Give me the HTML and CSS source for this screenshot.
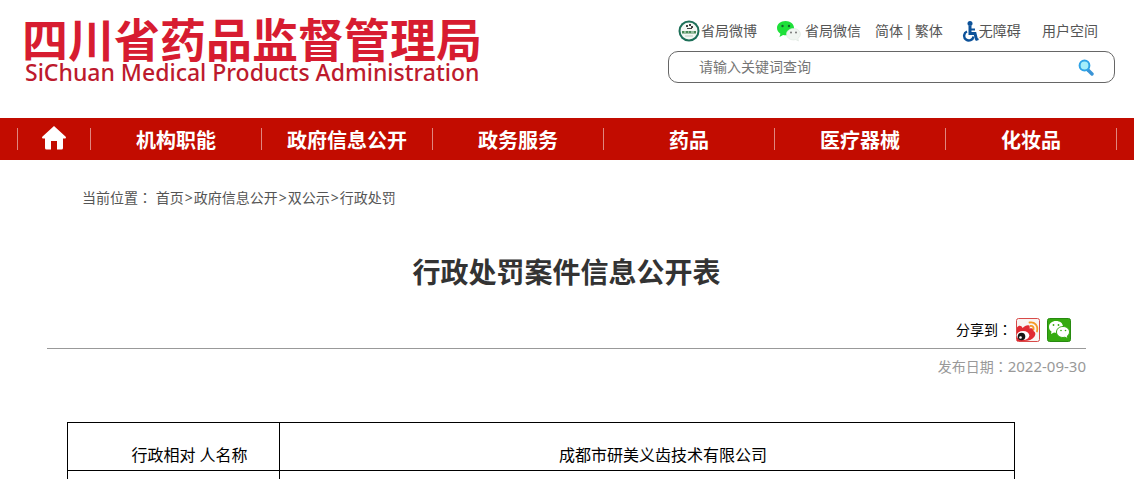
FILE: index.html
```html
<!DOCTYPE html>
<html lang="zh-CN">
<head>
  <meta charset="UTF-8" />
  <meta name="viewport" content="width=device-width, initial-scale=1.0"/>
  <title>行政处罚案件信息公开表</title>
  <link rel="stylesheet" href="styles.css">
</head>
<body>
  <header class="header">
    <a class="logo" href="#">
      <span class="logo-cn">四川省药品监督管理局</span>
      <span class="logo-en">SiChuan Medical Products Administration</span>
    </a>
    <div class="tools">
      <div class="top-links">
        <a href="#" class="weibo">
          <svg width="22" height="22" viewBox="0 0 22 22">
            <circle cx="11" cy="11" r="10.5" fill="#1d6f58"/>
            <circle cx="11" cy="11" r="8.500" fill="#f4f8f4"/>
            <path d="M8 5h2v2H8zM11 4h2v2h-2zM9 8h5v1H9zM13 6h2v2h-2z" fill="#444"/>
            <path d="M4 11h14v2.500H4z" fill="#4a8a58"/>
            <path d="M6 12h2M10 12h1M13 12h3" stroke="#dfeee2"/>
            <path d="M7 16h8" stroke="#b8ccbe"/>
          </svg>省局微博</a>
        <a href="#" class="weixin">
          <svg width="25" height="22" viewBox="0 0 25 22">
            <path d="M9.500 1C4.500 1 1 4 1 8c0 2.500 1.300 4.400 3.400 5.700L3.500 17l3.600-2c.8.200 1.600.300 2.400.3 5 0 8.500-3.200 8.500-7.300S14.500 1 9.500 1z" fill="#1fe03a"/>
            <circle cx="6.500" cy="6" r="1.200" fill="#14642a"/>
            <circle cx="13" cy="6" r="1.200" fill="#14642a"/>
            <path d="M17.500 8.500c-4 0-7 2.500-7 5.700s3 5.700 7 5.700c.8 0 1.500-.1 2.200-.3l2.800 1.400-.7-2.500c1.600-1 2.600-2.600 2.600-4.300 0-3.200-3-5.700-6.900-5.700z" fill="#f0f5f1" stroke="#dce5de" stroke-width=".6"/>
            <circle cx="15" cy="12.500" r="1" fill="#777"/>
            <circle cx="20" cy="12.500" r="1" fill="#777"/>
          </svg>省局微信</a>
        <span class="lang"><a href="#">简体</a>|<a href="#">繁体</a></span>
        <a href="#" class="barrier">
          <svg width="17" height="22" viewBox="0 0 17 22">
            <circle cx="8" cy="3.500" r="2.500" fill="#0d5299"/>
            <path d="M8 6v7.500h5l1.500 6" fill="none" stroke="#0d5299" stroke-width="3"/>
            <path d="M8 9.500h5M13.500 20l3-1" fill="none" stroke="#0d5299" stroke-width="2"/>
            <path d="M5 11.500a4.700 4.700 0 1 0 6.500 5" fill="none" stroke="#0d5299" stroke-width="2.400"/>
          </svg>无障碍</a>
        <a href="#" class="user">用户空间</a>
      </div>
      <form class="search">
        <input type="text" placeholder="请输入关键词查询" aria-label="请输入关键词查询">
        <button type="button" aria-label="搜索">
          <svg width="16" height="17" viewBox="0 0 16 17">
            <path d="M10 11l4 4" stroke="#3a94d6" stroke-width="3.400" stroke-linecap="round"/>
            <circle cx="6.500" cy="6.500" r="4.900" fill="#a4eefa" stroke="#2fa3e6" stroke-width="2"/>
          </svg>
        </button>
      </form>
    </div>
  </header>

  <nav class="nav">
    <a href="#" class="home" aria-label="首页">
      <svg width="24" height="24" viewBox="0 0 24 24">
        <path d="M12 0L0 11q0 1.500 1 1.500h2V22q0 1.500 1.500 1.500H9V15h6v8.500h4.500q1.500 0 1.500-1.500v-9.500h2q1 0 1-1.500z" fill="#fff"/>
      </svg>
    </a>
    <a href="#">机构职能</a>
    <a href="#">政府信息公开</a>
    <a href="#">政务服务</a>
    <a href="#">药品</a>
    <a href="#">医疗器械</a>
    <a href="#">化妆品</a>
  </nav>

  <div class="crumbs">当前位置<span class="colon" lang="zh-TW">：</span> <a href="#">首页</a><span class="sep">&gt;</span><a href="#">政府信息公开</a><span class="sep">&gt;</span><a href="#">双公示</a><span class="sep">&gt;</span><a href="#">行政处罚</a></div>

  <main class="article">
    <h1>行政处罚案件信息公开表</h1>
    <div class="share">
      <div class="share-label">分享到<span class="colon" lang="zh-TW">：</span></div>
      <a href="#" aria-label="微博">
        <svg width="24" height="24" viewBox="0 0 24 24">
          <rect x=".5" y=".5" width="23" height="23" rx="2" fill="#f8f4f2" stroke="#d84a48"/>
          <path d="M1 9.500C2.500 7 5.500 7 6.500 10c2-2 5-3.500 6.500-2.500 1 .700.800 2 .5 3 2.500-.8 4.500-.3 4 2.500 2 1 2.500 3 1 5.500-2 3-6 4.500-10.500 4.500H1z" fill="#e02a32"/>
          <ellipse cx="7" cy="17.500" rx="6.300" ry="4.500" fill="#fff"/>
          <circle cx="5.500" cy="18.500" r="3.800" fill="#151515"/>
          <circle cx="4.500" cy="19.500" r="1.300" fill="#fff"/>
          <path d="M13.500 4.500c5-1 9 3 7.500 9M14.500 8c2.500-.3 3.500 1.500 3 3.500" fill="none" stroke="#f59a23" stroke-width="1.800" stroke-linecap="round"/>
        </svg>
      </a>
      <a href="#" aria-label="微信">
        <svg width="24" height="24" viewBox="0 0 24 24">
          <rect x=".5" y=".5" width="23" height="23" rx="2" fill="#35aa10" stroke="#278a10"/>
          <path d="M9 3C5 3 2 5.500 2 9c0 2 1 3.500 2.500 4.500L4 16l3-1.500c5 1.500 9-1.500 9-5.500S13 3 9 3z" fill="#fff"/>
          <path d="M16 8.500c-3.700 0-6.500 2.400-6.500 5.500s3 5.500 6.500 5.500c.7 0 1.400-.1 2-.3l3 1.500-.7-2.700c1.400-1 2.200-2.400 2.200-4 0-3.100-2.800-5.500-6.500-5.500z" fill="#fff" stroke="#35aa10"/>
          <circle cx="6.500" cy="7" r=".9" fill="#35aa10"/>
          <circle cx="11.500" cy="7" r=".9" fill="#35aa10"/>
          <circle cx="14" cy="12.500" r=".8" fill="#35aa10"/>
          <circle cx="18.500" cy="12.500" r=".8" fill="#35aa10"/>
        </svg>
      </a>
    </div>
    <div class="date">发布日期<span class="colon" lang="zh-TW">：</span><time datetime="2022-09-30">2022-09-30</time></div>
    <table class="info">
      <tr>
        <th scope="row">行政相对 人名称</th>
        <td>成都市研美义齿技术有限公司</td>
      </tr>
      <tr>
        <th></th>
        <td></td>
      </tr>
    </table>
  </main>
</body>
</html>
```
FILE: styles.css
```css
* { box-sizing: border-box; }
body {
  margin: 0;
  font-family: "Noto Sans", "Noto Sans CJK SC", sans-serif;
  font-size: 14px;
  line-height: 20px;
  color: #555;
  background: #fff;
}
a {
  color: inherit;
  text-decoration: none;
}
svg { display: block; }
.colon { font-family: "Noto Sans CJK TC", sans-serif; line-height: 1; }
.header {
  display: flex;
  justify-content: space-between;
  height: 118px;
  padding: 0 19px 0 22px;
}
.logo {
  display: flex;
  flex-direction: column;
  padding-top: 15px;
  white-space: nowrap;
}
.logo-cn {
  font-family: "Noto Sans CJK SC", sans-serif;
  font-size: 46px;
  line-height: 44px;
  font-weight: bold;
  color: #d71c30;
}
.logo-en {
  padding-left: 3px;
  font-size: 23px;
  line-height: 26px;
  font-weight: 500;
  color: #bd1a2d;
}
.tools {
  width: 447px;
  padding-top: 20px;
}
.top-links {
  display: flex;
  align-items: center;
  height: 22px;
  padding: 0 17px 0 10px;
  margin-bottom: 9px;
  white-space: nowrap;
}
.top-links a {
  display: flex;
  align-items: center;
}
.weibo { gap: 1px; }
.weixin {
  gap: 4px;
  margin-left: 19px;
}
.lang {
  display: flex;
  gap: 2px;
  margin-left: 14px;
}
.barrier { margin-left: 19px; }
.top-links .user { margin-left: auto; }
.search {
  display: flex;
  align-items: center;
  height: 32px;
  padding: 0 20px 0 30px;
  border: 1px solid #666;
  border-radius: 10px;
}
.search input {
  flex: 1;
  min-width: 0;
  padding: 0;
  border: none;
  outline: none;
  background: none;
  font: inherit;
}
.search input::placeholder { color: #757575; }
.search button {
  padding: 0;
  border: none;
  background: none;
  cursor: pointer;
}
.nav {
  display: flex;
  align-items: center;
  height: 42px;
  padding: 0 17px;
  background: #c20c00;
  color: #fff;
  font-size: 20px;
  line-height: 26px;
  font-weight: bold;
}
.nav a {
  flex: 1;
  height: 22px;
  text-align: center;
  border-right: 1px solid #e0867f;
}
.nav .home {
  flex: 0 0 74px;
  display: flex;
  justify-content: center;
  align-items: flex-end;
  border-left: 1px solid #e0867f;
}
.crumbs { padding: 28px 82px 0; }
.sep { padding: 0 1px; }
.article { padding: 0 48px 0 47px; }
h1 {
  margin: 44px 0 0;
  font-size: 28px;
  line-height: 40px;
  text-align: center;
  color: #333;
}
.share {
  display: flex;
  justify-content: flex-end;
  align-items: center;
  gap: 7px;
  margin-top: 26px;
  padding: 0 15px 6px 0;
  border-bottom: 1px solid #999;
  color: #000;
}
.share-label { margin-right: -3px; }
.date {
  margin-top: 8px;
  text-align: right;
  color: #999;
}
.date time {
  font-size: 15px;
  line-height: 1;
}
.info {
  width: calc(100% - 91px);
  margin: 45px 0 0 20px;
  border-collapse: collapse;
  color: #000;
  font-size: 16px;
  line-height: 24px;
}
.info th,
.info td {
  height: 48px;
  padding: 0 0 3px;
  border: 1px solid #000;
  font-weight: normal;
  text-align: center;
  text-indent: 32px;
  vertical-align: bottom;
}
.info th { width: 212px; }
```
